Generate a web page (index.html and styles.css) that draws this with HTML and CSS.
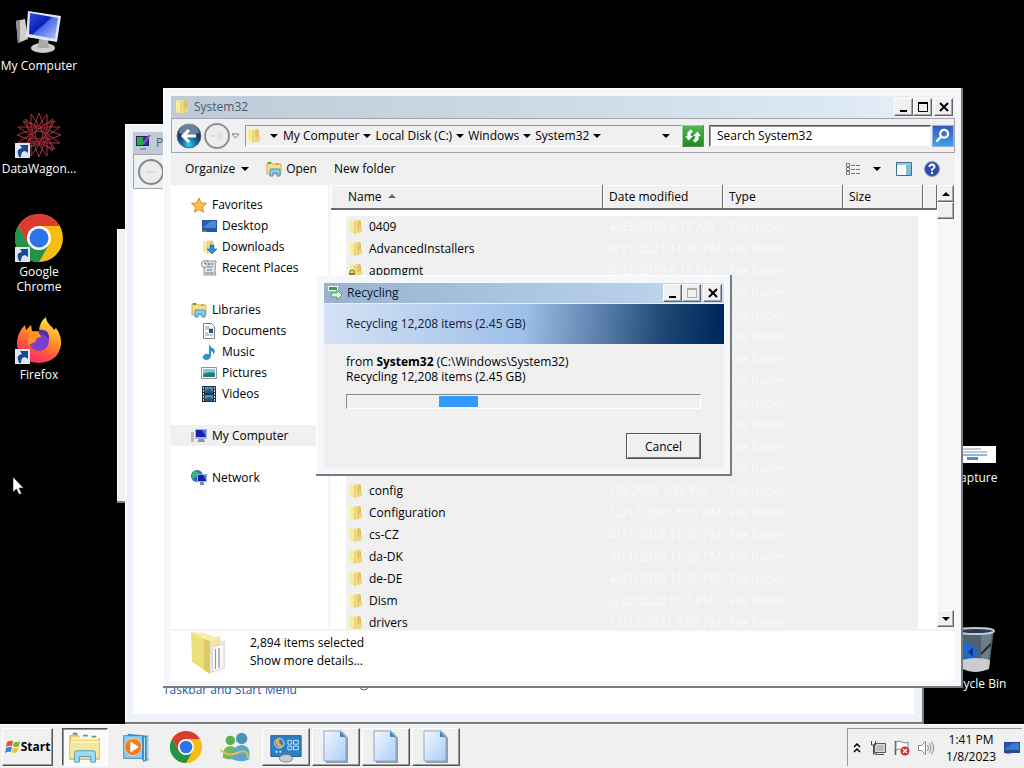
FILE: index.html
```html
<!DOCTYPE html>
<html lang="en">
<head>
<meta charset="utf-8">
<title>Desktop</title>
<link rel="stylesheet" href="styles.css">
</head>
<body>
<svg class="defs" aria-hidden="true">
  <defs>
    <linearGradient id="gFold" x2="1"><stop offset="0" stop-color="#f9eda6"/><stop offset="1" stop-color="#dcb94c"/></linearGradient>
    <linearGradient id="gScreen" x2="1" y2="1"><stop offset="0" stop-color="#2b50e0"/><stop offset=".45" stop-color="#0c1fb8"/><stop offset=".5" stop-color="#4a6be6"/><stop offset="1" stop-color="#b4c6fb"/></linearGradient>
    <linearGradient id="gDoc" x2="1" y2="1"><stop offset="0" stop-color="#f4f9ff"/><stop offset="1" stop-color="#a9ccf7"/></linearGradient>
    <linearGradient id="gFox" x1=".8" y1="0" x2=".3" y2="1"><stop offset="0" stop-color="#fff04a"/><stop offset=".4" stop-color="#ff9a28"/><stop offset=".75" stop-color="#ff4a44"/><stop offset="1" stop-color="#e82b7c"/></linearGradient>
    <radialGradient id="gOrb" cy=".85"><stop offset="0" stop-color="#35d3ee"/><stop offset=".6" stop-color="#16699f"/><stop offset="1" stop-color="#1c3c66"/></radialGradient>
    <symbol id="folder" viewBox="0 0 16 16"><path d="M2 1l6 1v13l-6-2z" fill="#f8eb9b"/><path d="M7 1h5l1 2v10l-6 2z" fill="url(#gFold)"/><path d="M7 2v13M10 3v6" stroke="#d2ae48" stroke-width=".7"/><path d="M11 8l3 1v4l-3 1z" fill="#efd67a"/></symbol>
    <symbol id="lib" viewBox="0 0 16 16"><path d="M1 2h5l1 1h8v10H1z" fill="#f5e18a" stroke="#cfae4e"/><path d="M2 2h3" stroke="#42a34a" stroke-width="2"/><path d="M10 3h3" stroke="#d96b3a"/><path d="M4 15V9q0-1 1-1h7q2 0 2 1v6h-3v-3H7v3z" fill="#8ecff0" stroke="#3d8fc4"/></symbol>
    <symbol id="arrow" viewBox="0 0 8 4"><path d="M0 0h8L4 4z"/></symbol>
    <symbol id="shortcut" viewBox="0 0 15 15"><path d="M0 0h15v15H0z" fill="#dfe8f2"/><path d="M4 14Q0 6 7 5L5 2h8v8l-3-2q-4 0-4 6z" fill="#174a93"/></symbol>
    <symbol id="chrome" viewBox="0 0 48 48"><circle cx="24" cy="24" r="24" fill="#f9bc15"/><path d="M3.200 12A24 24 0 0 0 24 48L34.400 30 13.600 30z" fill="#229348"/><path d="M24 24L13.600 30 3.200 12A24 24 0 0 1 44.800 12H24z" fill="#dc3b31"/><circle cx="24" cy="24" r="12" fill="#fff"/><circle cx="24" cy="24" r="9.500" fill="#2c74e8"/></symbol>
    <symbol id="page" viewBox="0 0 28 34"><path d="M4 2h17l5 6v25H4z" fill="#666" opacity=".6"/><path d="M2 1h17l5 6v24H2z" fill="url(#gDoc)" stroke="#8ba6c9"/><path d="M18 1l6 7q-4-2-6-1z" fill="#3985b4"/></symbol>
    <symbol id="pc" viewBox="0 0 48 44"><path d="M1 11l9-2 3 20-10 4z" fill="#cfcfc9"/><path d="M1 11l4-1v22l-2 1z" fill="#8f8f8b"/><ellipse cx="28" cy="38" rx="12" ry="5" fill="#cbcecb"/><path d="M24 29h9l1 9H23z" fill="#a6abae"/><path d="M13 1l33 5-4 26-31-5z" fill="#dfe6f2"/><path d="M15 3l28 5-3 21-26-5z" fill="url(#gScreen)"/></symbol>
    <symbol id="pcs" viewBox="0 0 16 16"><path d="M0 4h3v10H0z" fill="#bcbfae"/><path d="M4 1h12v10H4z" fill="#a9b7dd"/><path d="M5 2h10v7H5z" fill="#1a1fb0"/><path d="M11 2h4v7z" fill="#5a76e6"/><path d="M8 11h5l1 3H6z" fill="#8b94aa"/></symbol>
    <symbol id="min" viewBox="0 0 12 12"><path d="M2 9h7v2H2z"/></symbol>
    <symbol id="max" viewBox="0 0 12 12"><path d="M1 1h10v10H1zM2 3h8v7H2z" fill-rule="evenodd" fill="currentColor"/></symbol>
    <symbol id="close" viewBox="0 0 12 12"><path d="M2 2l8 8M10 2l-8 8" stroke="#000" stroke-width="2"/></symbol>
  </defs>
</svg>

<main class="desktop">
  <div class="icons left">
    <a class="shortcut" href="#pc-app"><svg class="pic" viewBox="0 0 48 48"><use href="#pc" y="2" width="48" height="44"/></svg><span>My Computer</span></a>
    <a class="shortcut" href="#dw"><svg class="pic" viewBox="0 0 48 48" fill="none" stroke="#a83440"><path d="M24 2L38 40 3 16H45L10 40z"/><path d="M24 46L10 8l35 24H3L38 8z"/><path d="M2 24L40 10 16 45V3L40 38z"/><path d="M46 24L8 38 32 3V45L8 10z"/><circle cx="24" cy="24" r="9" stroke-dasharray="3 2" stroke-width="4" stroke="#641a22"/><circle cx="24" cy="24" r="4" fill="#000"/><use href="#shortcut" y="32" width="15" height="15" stroke="none"/></svg><span>DataWagon...</span></a>
    <a class="shortcut" href="#chrome-app"><svg class="pic" viewBox="0 0 48 48"><use href="#chrome" width="48" height="48"/><use href="#shortcut" y="33" width="15" height="15"/></svg><span>Google<br>Chrome</span></a>
    <a class="shortcut" href="#firefox"><svg class="pic" viewBox="0 0 48 48"><path d="M24 46C9 46 1 35 2 24Q3 15 10 8l1 5 5-5 1 6 7 1Q24 5 31 0q0 5 6 10l2 3 2-2q6 8 5 17-3 17-22 18z" fill="url(#gFox)"/><circle cx="24" cy="24" r="10" fill="#7b3fd0"/><path d="M13 22Q17 12 24 15l2 5 -4 1-2 4-7 3z" fill="#ff9226"/><path d="M24 13q11-2 10 10-3-6-10-6z" fill="#582aa5"/><use href="#shortcut" y="32" width="15" height="15"/></svg><span>Firefox</span></a>
  </div>
  <div class="icons right">
    <a class="shortcut" href="#capture"><svg class="pic" viewBox="0 0 48 48"><path d="M4 26h41v17H4z" fill="#fff"/><path d="M6 29h24M6 32h30" stroke="#89a"/><path d="M6 35h30" stroke="#36a"/><path d="M16 37h11v3H16z" fill="#3c91df"/></svg><span>Capture</span></a>
    <a class="shortcut" href="#bin"><svg class="pic" viewBox="0 0 48 48"><path d="M6 4h37l-5 38q-14 8-28 0z" fill="#50636d"/><path d="M30 6h11l-4 34-7 3z" fill="#7d8f97" opacity=".6"/><path d="M8 20l8-4 6 2 2 6 4-1-2 11H9z" fill="#2567c9"/><path d="M12 21l5 5 5-5v10z" fill="#132f88"/><path d="M11 34q14-4 28 0l-1 9q-14 6-26 0z" fill="#c9cdd0"/><ellipse cx="24.500" cy="5" rx="18.500" ry="3" fill="#2d3c48" stroke="#bcccdc" stroke-width="2"/><path d="M40 18l-10 10" stroke="#202a32" stroke-width="2"/></svg><span>Recycle Bin</span></a>
  </div>

  <div class="window sliver"></div>

  <section class="window personalize" aria-label="Personalization">
    <header class="titlebar dull"><svg class="ico" viewBox="0 0 16 16"><path d="M0 1h13v10H0z" fill="#21245e"/><path d="M1 2h6v8H1z" fill="#2eaa3c"/><path d="M7 2h5v8H7z" fill="#2435b6"/><path d="M14 0L7 9" stroke="#a24cc7" stroke-width="2"/><path d="M4 13h6v2H4z" fill="#8c93a8"/></svg><span>Personalization</span></header>
    <div class="navbar"><svg class="orb" viewBox="0 0 26 26"><circle cx="13" cy="13" r="12" fill="#ececec" stroke="#85888c" stroke-width="2"/><path d="M8 13h9" stroke="#dcdcdc" stroke-width="2"/></svg></div>
    <div class="fill">
      <div class="links"><span>See also</span><a href="#tsm">Taskbar and Start Menu</a></div>
      <svg class="scraps" viewBox="0 0 240 8" fill="none" stroke="#555"><circle cx="7" cy="1" r="4"/><path d="M95 0v3M201 0v3M238 0l-3 3"/></svg>
    </div>
  </section>

  <section class="window explorer" aria-label="System32">
    <header class="titlebar dull">
      <svg class="ico"><use href="#folder"/></svg><span>System32</span>
      <div class="caption"><button aria-label="Minimize"><svg><use href="#min"/></svg></button><button aria-label="Maximize"><svg><use href="#max"/></svg></button><button class="x" aria-label="Close"><svg><use href="#close"/></svg></button></div>
    </header>
    <div class="navbar">
      <button class="flat" aria-label="Back"><svg class="orb" viewBox="0 0 26 26"><circle cx="13" cy="13" r="12" fill="url(#gOrb)" stroke="#56728c"/><path d="M3 10a10 9 0 0 1 20 0q-10 4-20 0z" fill="#fff" opacity=".35"/><path d="M20 13H8M13 7l-6 6 6 6" fill="none" stroke="#fff" stroke-width="3"/></svg></button>
      <button class="flat" aria-label="Forward"><svg class="orb" viewBox="0 0 26 26"><circle cx="13" cy="13" r="12" fill="#ededed" stroke="#8d8f92" stroke-width="2"/><path d="M7 13h11M14 9l4 4-4 4" fill="none" stroke="#e0e0e0" stroke-width="2"/></svg></button>
      <button class="flat recent" aria-label="Recent pages"><svg viewBox="0 0 9 6"><path d="M1 1h7L4.500 5z" fill="#fff" stroke="#777"/></svg></button>
      <nav class="address" aria-label="Address">
        <svg class="ico"><use href="#folder"/></svg><svg class="tri lead"><use href="#arrow"/></svg>
        <a href="#c1">My Computer</a><svg class="tri"><use href="#arrow"/></svg>
        <a href="#c2">Local Disk (C:)</a><svg class="tri"><use href="#arrow"/></svg>
        <a href="#c3">Windows</a><svg class="tri"><use href="#arrow"/></svg>
        <a href="#c4">System32</a><svg class="tri"><use href="#arrow"/></svg>
        <button class="flat drop" aria-label="Previous locations"><svg class="tri"><use href="#arrow"/></svg></button>
      </nav>
      <button class="go green" aria-label="Refresh"><svg viewBox="0 0 16 16" fill="#fff"><path d="M6 2l2 2-2 2v2h2l-4 4-3-4h2V5z"/><path d="M10 14l-2-2 2-2V8H8l4-4 3 4h-2v3z"/></svg></button>
      <input class="search" type="text" aria-label="Search" value="Search System32">
      <button class="go blue" aria-label="Search"><svg viewBox="0 0 16 16" fill="none" stroke="#fff"><circle cx="9" cy="6" r="3.500" stroke-width="2"/><path d="M6 9l-4 4" stroke-width="2"/></svg></button>
    </div>
    <div class="toolbar">
      <button class="flat">Organize<svg class="tri"><use href="#arrow"/></svg></button>
      <button class="flat open"><svg class="ico"><use href="#lib"/></svg>Open</button>
      <button class="flat">New folder</button>
      <div class="tools">
        <button class="flat" aria-label="Change view"><svg class="ico" viewBox="0 0 16 16" fill="none" stroke="#777"><path d="M1.500 2.500h3v3h-3zM1.500 6.500h3v3h-3zM1.500 10.500h3v3h-3z"/><path d="M6 4.500h4M11 4.500h4M6 8.500h4M11 8.500h4M6 12.500h4M11 12.500h4"/></svg></button>
        <button class="flat" aria-label="More views"><svg class="tri"><use href="#arrow"/></svg></button>
        <button class="flat pane" aria-label="Preview pane"><svg class="ico" viewBox="0 0 16 16"><path d="M.5 1.500h15v13H.5z" fill="#fff" stroke="#3d6d94"/><path d="M1 2h14v2H1z" fill="#9ec6e0"/><path d="M10 4h5v10h-5z" fill="#7fc0d8"/></svg></button>
        <button class="flat" aria-label="Help"><svg class="ico" viewBox="0 0 16 16"><circle cx="8" cy="8" r="7.500" fill="#2b4fae" stroke="#8b98bd"/><path d="M5.500 6q0-2.500 2.500-2.500T10.500 6Q10.500 7 8 8.500V10M8 11v2" fill="none" stroke="#fff" stroke-width="2"/></svg></button>
      </div>
    </div>
    <div class="content">
      <nav class="sidebar" aria-label="Folders">
        <ul>
          <li><a href="#s1"><svg class="ico" viewBox="0 0 16 16"><path d="M8 1l2 5 5.500.300-4 4 1 5L8 12.500 3.500 15.300l1-5-4-4L6 6z" fill="#f9c04a" stroke="#dd8a22"/></svg>Favorites</a></li>
          <li class="sub"><a href="#s2"><svg class="ico" viewBox="0 0 16 16"><path d="M1 2h15v12H1z" fill="#28549f"/><path d="M2 3h13v7H2z" fill="#4689d8"/><path d="M2 3h8L2 10z" fill="#2860b4"/><path d="M1 13h5" stroke="#7bb84a"/></svg>Desktop</a></li>
          <li class="sub"><a href="#s3"><svg class="ico" viewBox="0 0 16 16"><use href="#folder" width="15" height="16"/><path d="M9 6h4v4h3l-5 5-5-5h3z" fill="#2c8ad8" stroke="#1b64a8" stroke-width=".6"/></svg>Downloads</a></li>
          <li class="sub"><a href="#s4"><svg class="ico" viewBox="0 0 16 16"><path d="M5 1h10l-1 10 1 4H3V7z" fill="#dfe4e8" stroke="#8896a2"/><path d="M8 4h5M7 7h5M6 10h5M4 13h9" stroke="#6b7f90"/><circle cx="4" cy="4" r="3.500" fill="#f3f4f6" stroke="#7d8894"/><path d="M4 2v2h2" fill="none" stroke="#555"/></svg>Recent Places</a></li>
        </ul>
        <ul>
          <li><a href="#s5"><svg class="ico"><use href="#lib"/></svg>Libraries</a></li>
          <li class="sub"><a href="#s6"><svg class="ico" viewBox="0 0 16 16"><path d="M2.500.5h8l3 3v12h-11z" fill="#fff" stroke="#76828e"/><path d="M4 4h4M4 6h8M4 10h3M4 12h8" stroke="#8397ac"/><path d="M8 6h4v4H8z" fill="#35506d"/></svg>Documents</a></li>
          <li class="sub"><a href="#s7"><svg class="ico" viewBox="0 0 16 16"><path d="M8 0q1 3 5 5 2 3-1 6 1-3-2-4v5q-1 4-5 4-4-1-3-4 2-3 6-2z" fill="#2f93cf"/></svg>Music</a></li>
          <li class="sub"><a href="#s8"><svg class="ico" viewBox="0 0 16 16"><path d="M.5 2.500h15v11H.5z" fill="#fff" stroke="#8c969c"/><path d="M2 4h12v8H2z" fill="#7cc8df"/><path d="M2 9q6-3 12-1v4H2z" fill="#257f76"/></svg>Pictures</a></li>
          <li class="sub"><a href="#s9"><svg class="ico" viewBox="0 0 16 16"><path d="M1 0h14v16H1z" fill="#25303a"/><path d="M4 1h8v6H4zM4 9h8v6H4z" fill="#4a90c4"/><path d="M2.500 1v14M13.500 1v14" stroke="#dde" stroke-dasharray="2 1"/><path d="M4 5l4-3 4 4v1H4zM4 13l4-2 4 2v2H4z" fill="#275b84"/></svg>Videos</a></li>
        </ul>
        <ul><li class="on"><a href="#s10"><svg class="ico"><use href="#pcs"/></svg>My Computer</a></li></ul>
        <ul><li><a href="#s11"><svg class="ico" viewBox="0 0 16 16"><circle cx="6" cy="6" r="6" fill="#2273c4"/><path d="M2 2q4-2 6 1L5 6 2 9Q0 6 2 2z" fill="#3ebd68"/><path d="M6 4h10v8H6z" fill="#9db0da"/><path d="M7 5h8v6H7z" fill="#101fa8"/><path d="M12 5h3v6z" fill="#5473e2"/><path d="M9 12h4v3H9z" fill="#7e8aa8"/></svg>Network</a></li></ul>
      </nav>
      <div class="list">
        <table>
          <thead><tr><th class="c-name">Name<svg class="sort" viewBox="0 0 8 4"><path d="M0 4h8L4 0z" fill="#666"/></svg></th><th class="c-date">Date modified</th><th class="c-type">Type</th><th class="c-size">Size</th><th class="c-end"></th></tr></thead>
          <tbody>
            <tr><td><svg class="ico"><use href="#folder"/></svg>0409</td><td>4/23/2019 6:17 AM</td><td>File folder</td><td></td></tr>
            <tr><td><svg class="ico"><use href="#folder"/></svg>AdvancedInstallers</td><td>9/11/2021 11:26 PM</td><td>File folder</td><td></td></tr>
            <tr><td><svg class="ico" viewBox="0 0 16 16"><use href="#folder" width="16" height="16"/><path d="M1 10h6v5H1z" fill="#9a7a1c"/><path d="M2 10V8q2-2 4 0v2" fill="none" stroke="#7c6218"/></svg>appmgmt</td><td>4/22/2019 6:14 PM</td><td>File folder</td><td></td></tr>
            <tr><td></td><td></td><td>File folder</td><td></td></tr>
            <tr><td></td><td></td><td>File folder</td><td></td></tr>
            <tr><td></td><td></td><td>File folder</td><td></td></tr>
            <tr><td></td><td></td><td>File folder</td><td></td></tr>
            <tr><td></td><td></td><td>File folder</td><td></td></tr>
            <tr><td></td><td></td><td>File folder</td><td></td></tr>
            <tr><td></td><td></td><td>File folder</td><td></td></tr>
            <tr><td></td><td></td><td>File folder</td><td></td></tr>
            <tr><td></td><td></td><td>File folder</td><td></td></tr>
            <tr><td><svg class="ico"><use href="#folder"/></svg>config</td><td>1/8/2023 1:36 PM</td><td>File folder</td><td></td></tr>
            <tr><td><svg class="ico"><use href="#folder"/></svg>Configuration</td><td>12/17/2021 5:51 AM</td><td>File folder</td><td></td></tr>
            <tr><td><svg class="ico"><use href="#folder"/></svg>cs-CZ</td><td>4/11/2018 11:20 PM</td><td>File folder</td><td></td></tr>
            <tr><td><svg class="ico"><use href="#folder"/></svg>da-DK</td><td>9/11/2019 11:26 PM</td><td>File folder</td><td></td></tr>
            <tr><td><svg class="ico"><use href="#folder"/></svg>de-DE</td><td>4/21/2019 11:20 PM</td><td>File folder</td><td></td></tr>
            <tr><td><svg class="ico"><use href="#folder"/></svg>Dism</td><td>3/22/2022 6:11 PM</td><td>File folder</td><td></td></tr>
            <tr><td><svg class="ico"><use href="#folder"/></svg>drivers</td><td>12/17/2021 9:52 PM</td><td>File folder</td><td></td></tr>
          </tbody>
        </table>
        <div class="scroll"><button aria-label="Scroll up"><svg viewBox="0 0 8 4"><path d="M0 4h8L4 0z"/></svg></button><div class="thumb"></div><button class="down" aria-label="Scroll down"><svg><use href="#arrow"/></svg></button></div>
      </div>
    </div>
    <footer class="details">
      <svg viewBox="0 0 36 44"><path d="M18 12l17-3v28l-15 5z" fill="#eee6ee"/><path d="M20 8l10-3 2 32-10 5z" fill="#f2e3a0"/><path d="M22 16l12-3v24l-11 4z" fill="#fafafd" stroke="#d9d5de"/><path d="M25.500 18v20" stroke="#8d92b0"/><path d="M29 17v20" stroke="#b3b8d0" stroke-width="2"/><path d="M1 1l19 8v34L2 31z" fill="#ece07a"/><path d="M1 1l14 1 14 6-9 3z" fill="#f7eda8"/><path d="M14 8l6 2v33l-6-4z" fill="#dec964"/></svg>
      <div><p class="count">2,894 items selected</p><a href="#more">Show more details...</a></div>
    </footer>
  </section>

  <section class="window dialog" role="dialog" aria-label="Recycling">
    <header class="titlebar">
      <svg class="ico" viewBox="0 0 16 16"><path d="M1 1h10v5H1z" fill="#fff"/><path d="M2 2h8v3H2z" fill="#21a83a"/><path d="M4 8h6V5l5 5-5 5v-3H5z" fill="#e3f5e4" stroke="#55a766"/></svg><span>Recycling</span>
      <div class="caption"><button aria-label="Minimize"><svg><use href="#min"/></svg></button><button class="off" aria-label="Maximize" disabled><svg><use href="#max"/></svg></button><button class="x" aria-label="Close"><svg><use href="#close"/></svg></button></div>
    </header>
    <div class="banner">Recycling 12,208 items (2.45 GB)</div>
    <div class="body">
      <p>from <strong>System32</strong> (C:\Windows\System32)</p>
      <p>Recycling 12,208 items (2.45 GB)</p>
      <div class="progress" role="progressbar" aria-label="Recycling progress"><div class="chunk"></div></div>
      <button class="cancel">Cancel</button>
    </div>
  </section>

  <svg class="cursor" viewBox="0 0 12 19"><path d="M1 1v15l3.500-3 2.500 5.500 2.500-1L7 12h4.500z" fill="#fff" stroke="#222" stroke-width=".6"/></svg>
</main>

<footer class="taskbar">
  <button class="start"><svg viewBox="0 0 16 16"><path d="M2 3q3-2 6-1L7 7Q4 6 1 8z" fill="#e8542a"/><path d="M9 3q3 1 6-1l-1 5q-3 2-6 0z" fill="#7cba3c"/><path d="M1 9q3-2 6-1l-1 5q-3-1-6 1z" fill="#3c87d6"/><path d="M8 9q3 1 6-1l-2 5q-3 2-5 0z" fill="#f5c02c"/></svg>Start</button>
  <div class="tasks">
    <button class="task pressed" aria-label="Windows Explorer"><svg viewBox="0 0 36 36"><path d="M2 6h9l2 3h20v22H2z" fill="#f3dd82" stroke="#c9a94c"/><path d="M4 9h28M3 13h30" stroke="#fff6c8" stroke-width="2"/><path d="M5 4h5M16 6h5M25 7h5" stroke="#5b9b6a" stroke-width="2"/><path d="M2 15h31v14H2z" fill="#f6e69a"/><path d="M7 34V24q0-2 3-2h16q3 0 3 2v10h-5v-6H12v6z" fill="#9fdcf3" stroke="#4799c4"/></svg></button>
    <button class="task plain" aria-label="Media Player"><svg viewBox="0 0 36 36"><path d="M9 4l22 2v26l-5 2z" fill="#3e93cb"/><path d="M5 6h20v24H5z" fill="#8ecdf0" stroke="#3a84b6"/><path d="M27 8v24M30 7v24" stroke="#c5e6f7"/><circle cx="15" cy="18" r="9" fill="#ee7c23" stroke="#fbd0a4"/><path d="M12 12l9 6-9 6z" fill="#fff"/></svg></button>
    <button class="task plain" aria-label="Chrome"><svg><use href="#chrome" x="2" y="1" width="32" height="32"/></svg></button>
    <button class="task plain" aria-label="Messenger"><svg viewBox="0 0 36 36"><circle cx="12" cy="11" r="5" fill="#5cae4c"/><path d="M4 29q0-12 8-12t8 12q-8 4-16 0z" fill="#70b85b"/><circle cx="24" cy="9" r="6" fill="#4a94b8"/><path d="M14 31q0-15 10-15t8 15q-8 4-18 0z" fill="#5aa8cf"/><path d="M2 21q8 8 18 3t11 6" fill="none" stroke="#eebc4e" stroke-width="2"/></svg></button>
    <button class="task" aria-label="Control Panel"><svg viewBox="0 0 36 36"><path d="M2 6h32v22H2z" fill="#2d7fc3" stroke="#185a93"/><circle cx="11" cy="14" r="5" fill="none" stroke="#d9eefb"/><path d="M11 14V8a5 5 0 1 0 4 9z" fill="#f3a93a"/><path d="M20 11h4v4h-4zM26 11h5v4h-5zM20 17h4v4h-4zM26 17h5v4h-5z" fill="none" stroke="#c8e8fa"/><path d="M7 23h2M11 23h2" stroke="#c8e8fa" stroke-width="2"/><ellipse cx="18" cy="30" rx="7" ry="4" fill="#c7cbd0" stroke="#7c8288"/></svg></button>
    <button class="task" aria-label="Document 1"><svg><use href="#page"/></svg></button>
    <button class="task" aria-label="Document 2"><svg><use href="#page"/></svg></button>
    <button class="task" aria-label="Document 3"><svg><use href="#page"/></svg></button>
  </div>
  <div class="tray">
    <button class="flat" aria-label="Show hidden icons"><svg class="chev" viewBox="0 0 8 10" fill="none" stroke="#000" stroke-width="1.500"><path d="M1 4l3-3 3 3M1 9l3-3 3 3"/></svg></button>
    <svg class="ico" viewBox="0 0 16 16"><path d="M4.500 3.500h11v9h-11z" fill="#ddd" stroke="#555"/><path d="M6 14.500h8" stroke="#555"/><path d="M1.500 1v4h4V1M3.500 5v9H7" fill="none" stroke="#444"/><path d="M6 5h8v6H6z" fill="#bbb"/></svg>
    <svg class="ico" viewBox="0 0 16 16"><path d="M1.500 1v14" stroke="#555" stroke-width="1.500"/><path d="M2 2q3-2 6 0t6 0v8q-3 2-6 0t-6 0z" fill="#fafafa" stroke="#888"/><circle cx="11" cy="11" r="4.500" fill="#d32b2b"/><path d="M9 9l4 4M13 9l-4 4" stroke="#fff" stroke-width="1.500"/></svg>
    <svg class="ico" viewBox="0 0 16 16" fill="none" stroke="#888"><path d="M.5 5.500h3l4-4v13l-4-4h-3z" fill="#fff"/><path d="M9.500 5q2 3 0 6M11.500 3q3 5 0 10M13.500 1.500q4 6.500 0 13"/></svg>
    <time class="clock">1:41 PM<br>1/8/2023</time>
    <svg class="ico" viewBox="0 0 16 16"><path d="M0 2h16v11H0z" fill="#234c93"/><path d="M1 3h14v7H1z" fill="#3a79cc"/><path d="M1 3h9l-9 6z" fill="#245bae"/><path d="M2 13h5v1H2z" fill="#6a8"/></svg>
  </div>
</footer>
</body>
</html>
```
FILE: styles.css
```css
* { box-sizing: border-box; }
body { margin: 0; height: 100vh; display: flex; flex-direction: column; overflow: hidden; background: #000; color: #000; font: 12px/16px "Open Sans", "Noto Sans", sans-serif; }
button, input { font: inherit; color: inherit; }
a { color: inherit; text-decoration: none; }
p { margin: 0; }
ul { list-style: none; margin: 0; padding: 0; }
.defs { position: absolute; width: 0; height: 0; }
.ico { width: 16px; height: 16px; flex: none; }
.tri { width: 8px; height: 4px; flex: none; }
.flat { border: 0; background: none; padding: 0; display: flex; align-items: center; }

.desktop { flex: 1; position: relative; overflow: hidden; min-height: 0; }
.icons { position: absolute; display: flex; flex-direction: column; }
.icons.left { left: 0; top: 8px; }
.icons.right { right: 10px; bottom: 0; }
.shortcut { width: 78px; height: 103px; display: flex; flex-direction: column; align-items: center; gap: 2px; color: #fff; text-align: center; line-height: 15px; }
.right .shortcut { height: 206px; }
.right .shortcut:last-child { height: 98px; }
.pic { width: 48px; height: 48px; }
.cursor { position: absolute; left: 12px; top: 476px; width: 12px; height: 19px; }

.window { position: absolute; display: flex; flex-direction: column; padding: 8px; background: #f5f8fb; border: solid #777c82; border-width: 0 2px 2px 0; box-shadow: inset 1px 1px #fff; }
.sliver { left: 117px; top: 229px; width: 400px; height: 274px; background: #f0f0f0; }
.personalize { left: 125px; top: 124px; right: 100px; bottom: 0; background: #edf2f8; }
.explorer { left: 163px; top: 88px; right: 61px; bottom: 36px; padding: 8px 6px 5px 8px; }
.dialog { left: 316px; top: 275px; width: 416px; padding: 8px 6px 6px 8px; }

.titlebar { display: flex; align-items: center; gap: 4px; height: 20px; flex: none; padding: 0 2px 0 3px; background: linear-gradient(90deg, #98b2d0, #b8d0ea 80%, #d5e3f2); color: #0b1830; }
.titlebar.dull { height: 22px; background: linear-gradient(90deg, #bfcad8, #cedae6 50%, #dce8f4 85%, #edf3f9); color: #4b5a6b; }
.caption { display: flex; margin-left: auto; }
.caption button { width: 19px; height: 18px; padding: 0; display: grid; place-items: center; background: #f0f0f0; border: 1px solid; border-color: #fff #666 #666 #fff; box-shadow: inset -1px -1px #aaa; color: #000; }
.caption svg { width: 12px; height: 12px; }
.caption .x { margin-left: 2px; }
.caption .off { color: #aaa; }

.navbar { display: flex; align-items: center; height: 35px; flex: none; padding: 0 0 0 4px; border: 1px solid #a3a3ae; background: #f0f0f0; }
.orb { width: 26px; height: 26px; flex: none; }
.flat + .flat .orb { margin-left: 2px; }
.recent svg { width: 9px; height: 6px; margin: 0 5px 0 1px; }
.address { flex: 1; min-width: 0; display: flex; align-items: center; height: 22px; border: 1px solid; border-color: #999 #fff #fff #999; white-space: nowrap; }
.address a { margin: 0 4px; }
.address .lead { margin-left: 8px; margin-right: 1px; }
.drop { margin: 0 11px 0 auto; }
.go { width: 22px; height: 22px; flex: none; padding: 0; display: grid; place-items: center; border: 1px solid; }
.go svg { width: 18px; height: 18px; }
.green { background: linear-gradient(#55b655, #1d8a26); border-color: #9cc99c #5b8c5b #5b8c5b #9cc99c; }
.blue { background: linear-gradient(#3359bd, #3ca3e6); border-color: #95b2e0; }
.search { width: 222px; height: 22px; margin: 0 1px 0 5px; padding: 0 7px; background: #fff; border: 1px solid; border-color: #555 #eee #eee #666; box-shadow: inset 1px 1px #999; border-radius: 0; }

.toolbar { display: flex; align-items: center; height: 32px; flex: none; padding: 0 15px 0 14px; gap: 17px; background: #f0f0f0; }
.toolbar .tri { margin-left: 6px; }
.open .ico { margin-right: 4px; }
.tools { display: flex; align-items: center; gap: 12px; margin-left: auto; }
.tools .tri { margin: 0; }
.tools .pane { margin-left: 3px; }

.content { flex: 1; min-height: 0; display: flex; background: #fff; }
.sidebar { width: 160px; flex: none; padding-top: 9px; border-right: 3px solid #f5f5f5; }
.sidebar ul + ul { margin-top: 21px; }
.sidebar a { display: flex; align-items: center; gap: 5px; height: 21px; padding-left: 20px; }
.sidebar .sub a { padding-left: 30px; gap: 5px; }
.sidebar .on { background: #f0f0f0; }
.list { flex: 1; min-width: 0; display: flex; overflow: hidden; }
table { flex: 1; min-width: 0; table-layout: fixed; border-spacing: 0; align-self: flex-start; }
th { height: 25px; padding: 0 0 0 6px; text-align: left; font-weight: 400; background: #f0f0f0; border: solid #6b6b6b; border-width: 0 1px 2px 0; box-shadow: inset 1px 1px #fff; }
.c-name { width: 272px; padding-left: 17px; }
.c-date, .c-type { width: 120px; }
.c-size { width: 80px; }
.sort { width: 8px; height: 4px; margin: 0 0 3px 6px; }
tbody::before { content: ""; display: table-row; height: 6px; }
td { height: 22px; padding: 0 0 0 6px; background: #f0f0f0; color: #fafafa; white-space: nowrap; line-height: 16px; }
td:first-child { border-left: 15px solid #fff; padding-left: 2px; color: #000; }
td:nth-child(4) { border-right: 5px solid #fff; }
td .ico { vertical-align: top; margin-right: 5px; }
.scroll { width: 18px; flex: none; display: flex; flex-direction: column; padding-bottom: 2px; background: #f8f8f8; }
.scroll button, .thumb { width: 17px; height: 17px; padding: 0; display: grid; place-items: center; background: #f0f0f0; border: 1px solid; border-color: #fff #666 #666 #fff; box-shadow: inset -1px -1px #aaa; }
.scroll svg { width: 8px; height: 4px; }
.scroll .down { margin-top: auto; }

.details { display: flex; gap: 24px; height: 52px; flex: none; padding-left: 19px; background: #fff; border-top: 2px solid #f3f3f3; }
.details svg { width: 36px; height: 44px; }
.details div { padding-top: 3px; line-height: 18px; }

.fill { flex: 1; position: relative; background: #fff; overflow: hidden; }
.links { position: absolute; left: 30px; bottom: 16px; display: flex; flex-direction: column; gap: 7px; }
.links a { color: #1f57a8; }
.scraps { position: absolute; left: 224px; bottom: 21px; width: 240px; height: 8px; }

.banner { height: 41px; padding: 0 22px; display: flex; align-items: center; color: #101c38; border-top: 1px solid #e6effa; background: linear-gradient(95deg, #d6e2f5, #9dbfe8 50%, #5d83ae 68%, #1f4672 85%, #002a5c 98%); }
.body { padding: 10px 23px 9px 22px; background: #f0f0f0; line-height: 15px; display: flex; flex-direction: column; }
.progress { height: 15px; margin-top: 10px; border: 1px solid; border-color: #888 #fff #fff #888; padding: 1px 0; }
.chunk { width: 11%; height: 11px; margin-left: 26%; background: #3399ff; }
.cancel { align-self: flex-end; width: 75px; height: 26px; margin-top: 24px; padding: 0; background: #f0f0f0; border: 1px solid #555; box-shadow: inset 1px 1px #fff, inset -1px -1px #777; }

.taskbar { height: 44px; flex: none; display: flex; align-items: center; padding: 2px 2px 1px; background: #f0f0f0; border-top: 1px solid #fff; }
.start { width: 51px; height: 38px; padding: 0; display: flex; align-items: center; justify-content: center; font-weight: 700; background: #f0f0f0; border: 1px solid; border-color: #fff #555 #555 #fff; box-shadow: inset -1px -1px #999; }
.start svg { width: 16px; height: 16px; }
.tasks { display: flex; gap: 2px; margin-left: 9px; }
.task { width: 48px; height: 38px; padding: 0; display: grid; place-items: center; background: #f0f0f0; border: 1px solid; border-color: #fff #555 #555 #fff; box-shadow: inset -1px -1px #999; }
.task svg { width: 36px; height: 34px; }
.plain { border: 0; box-shadow: none; }
.pressed { width: 46px; margin-right: 2px; background: #fafafa; border-color: #555 #fff #fff #555; box-shadow: inset 1px 1px #999; }
.tray { margin-left: auto; display: flex; align-items: center; gap: 8px; height: 38px; padding: 0 2px 0 5px; border: solid #999; border-width: 1px 0 0 1px; }
.chev { width: 8px; height: 10px; margin-right: 1px; }
.clock { text-align: center; line-height: 17px; padding-left: 4px; }
```
